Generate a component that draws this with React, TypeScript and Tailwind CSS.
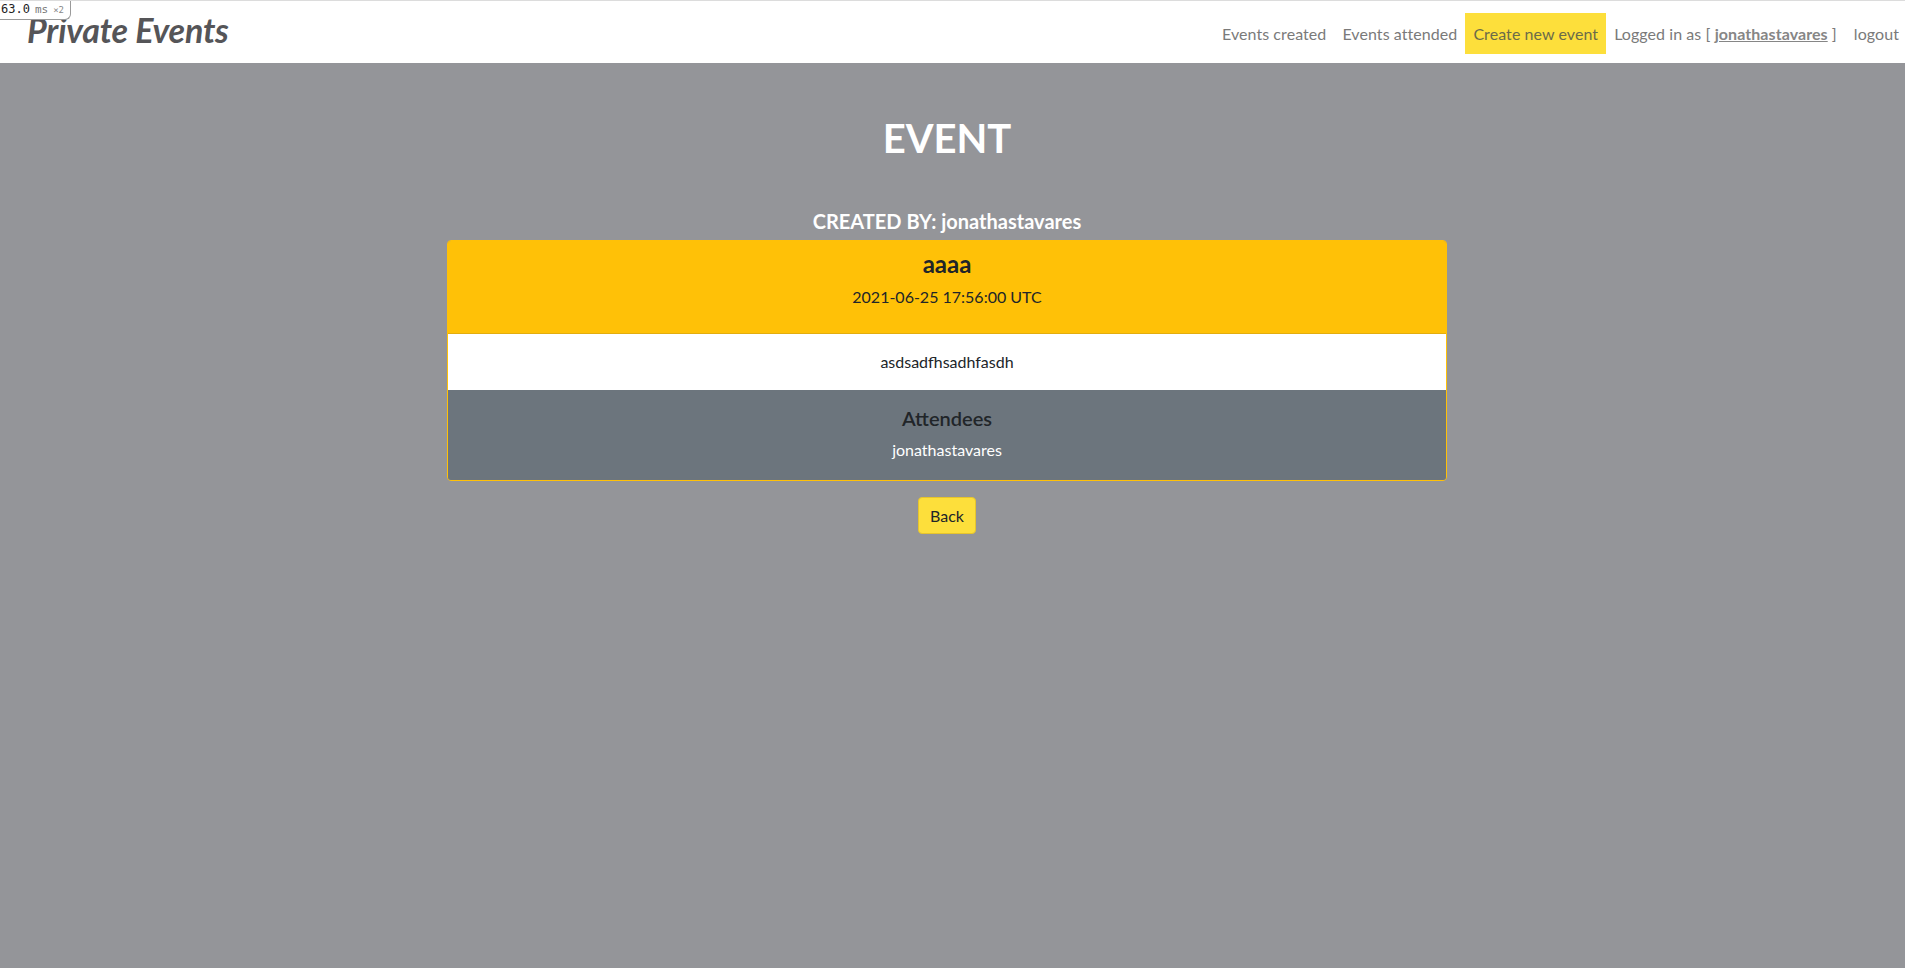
import * as React from "react"

const font = { fontFamily: '"Lato", "Noto Sans", sans-serif' }
const mono = { fontFamily: '"DejaVu Sans Mono", monospace' }

function ProfilerBadge() {
  return (
    <div className="absolute left-0 top-0 z-10 flex h-[19px] items-baseline gap-[5px] rounded-br-[6px] border border-l-0 border-t-0 border-[#9a9a9a] bg-white pl-[1px] pr-[6px] leading-[17px]">
      <span className="text-[12px] text-[#222]" style={mono}>63.0</span>
      <span className="text-[11px] text-[#777]" style={mono}>ms</span>
      <span className="text-[9px] text-[#888]" style={mono}>×2</span>
    </div>
  )
}

function Navbar() {
  return (
    <nav className="relative flex h-[63px] items-center justify-between border-t border-[#dcdcdc] bg-white pl-[27px]">
      <ProfilerBadge />
      <a className="-mt-[6px] text-[34px] font-bold italic tracking-[-0.2px] text-[#555558]">
        Private Events
      </a>
      <ul className="mt-[2px] flex items-center text-[16px] tracking-[0.07px] text-[#7a7a7a]">
        <li className="px-2 py-2 leading-[25px]">Events created</li>
        <li className="px-2 py-2 leading-[25px]">Events attended</li>
        <li className="bg-[#fddf3b] px-2 py-2 leading-[25px] text-[#6b6b4a]">Create new event</li>
        <li className="px-2 py-2 leading-[25px]">
          Logged in as [ <span className="font-bold text-[#868686] underline">jonathastavares</span> ]
        </li>
        <li className="py-2 pl-[9px] pr-[6px] leading-[25px]">logout</li>
      </ul>
    </nav>
  )
}

export default function App() {
  return (
    <div className="min-h-[968px] bg-[#949599]" style={font}>
      <Navbar />
      <main className="flex flex-col items-center pr-[11px]">
        <h1 className="mt-[51px] text-[40px] font-bold leading-[48px] text-white">EVENT</h1>
        <h5 className="mt-[47px] text-[20px] font-bold leading-6 text-white">
          CREATED BY: jonathastavares
        </h5>
        <div className="mt-[7px] w-[1000px] overflow-hidden rounded-[4px] border border-[#ffc107] text-center">
          <div className="flex h-[93px] flex-col items-center border-b border-[#e3ad0e] bg-[#ffc107] pt-[8px]">
            <h4 className="text-[24px] font-bold leading-[29px] text-[#212529]">aaaa</h4>
            <p className="mt-[7px] text-[16px] leading-6 text-[#212529]">2021-06-25 17:56:00 UTC</p>
          </div>
          <div className="flex h-[56px] items-center justify-center bg-white text-[16px] text-[#212529]">
            asdsadfhsadhfasdh
          </div>
          <div className="flex h-[90px] flex-col items-center bg-[#6c757d] pt-[16px]">
            <h5 className="text-[20px] font-semibold leading-6 text-[#212529]">Attendees</h5>
            <p className="mt-[8px] text-[16px] leading-6 text-white">jonathastavares</p>
          </div>
        </div>
        <button className="mt-[16px] h-[37px] w-[58px] rounded-[4px] border border-[#e6c42c] bg-[#fddf3b] text-[16px] text-[#212529]">
          Back
        </button>
      </main>
    </div>
  )
}
